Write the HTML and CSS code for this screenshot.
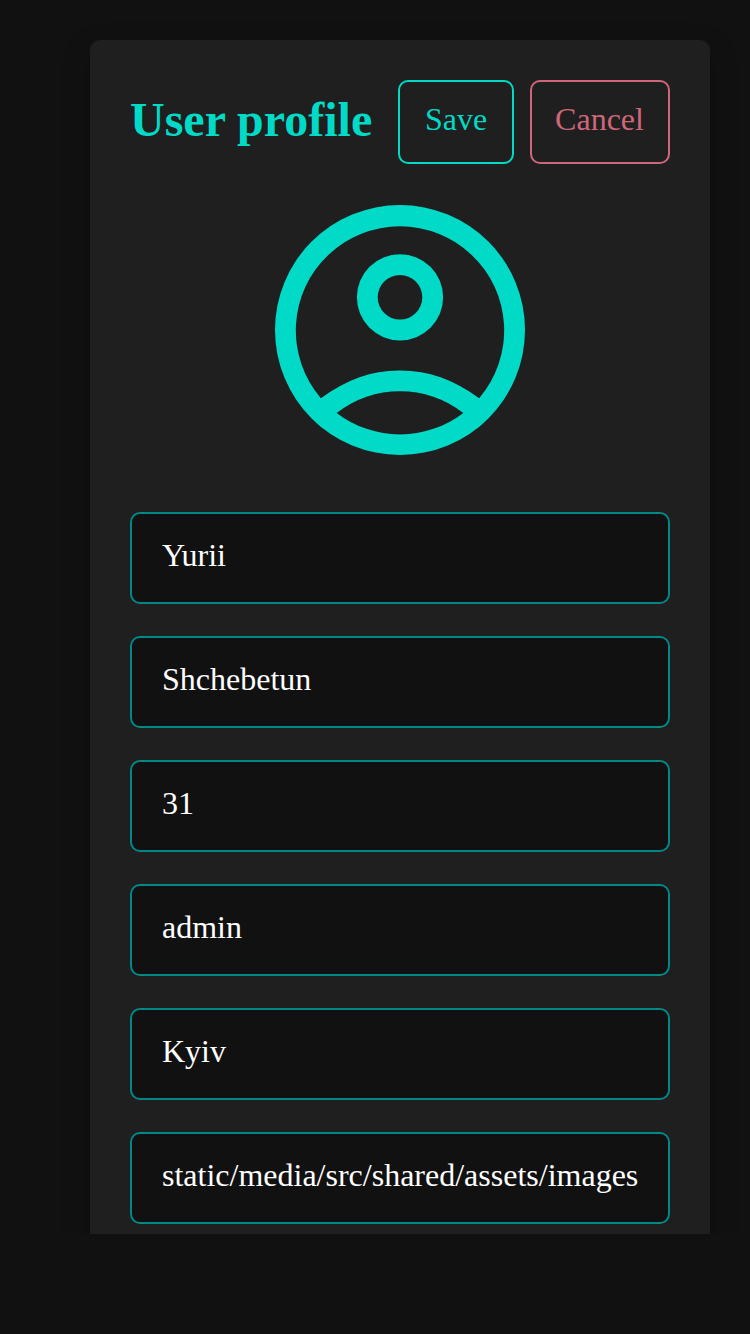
FILE: index.html
```html
<!DOCTYPE html>
<html lang="en">
<head>
<meta charset="utf-8">
<title>User profile</title>
<link rel="stylesheet" href="styles.css">
</head>
<body>
<main class="page">
  <section class="card">
    <header class="card-header">
      <h1 class="title">User profile</h1>
      <div class="actions">
        <button class="btn btn-save" type="button">Save</button>
        <button class="btn btn-cancel" type="button">Cancel</button>
      </div>
    </header>
    <svg class="avatar" viewBox="0 0 24 24" fill="currentColor" fill-rule="evenodd" aria-hidden="true">
      <path d="M12 0A12 12 0 1 1 12 24A12 12 0 1 1 12 0ZM4.4 18.54Q6.3 17.18 8.1 16.53T12 15.89Q14.1 15.89 15.9 16.53T19.6 18.54A10 10 0 1 0 4.4 18.54ZM5.92 19.96A10 10 0 0 0 18.08 19.96C16.3 18.57 14.2 17.87 12 17.87C9.8 17.87 7.7 18.57 5.92 19.96Z"/>
      <path d="M12 4.72A4.14 4.14 0 1 1 12 13A4.14 4.14 0 1 1 12 4.72ZM12 6.72A2.14 2.14 0 1 0 12 11A2.14 2.14 0 1 0 12 6.72Z"/>
    </svg>
    <div class="fields">
      <div class="field">Yurii</div>
      <div class="field">Shchebetun</div>
      <div class="field">31</div>
      <div class="field">admin</div>
      <div class="field">Kyiv</div>
      <div class="field">static/media/src/shared/assets/images</div>
    </div>
  </section>
</main>
</body>
</html>
```
FILE: styles.css
```css
* { box-sizing: border-box; }

body {
  margin: 0;
  height: 1334px;
  overflow: hidden;
  background: #111;
  font-family: "Liberation Serif", "Times New Roman", serif;
}

.page {
  height: 1234px;
  padding: 40px 40px 0 90px;
  overflow: hidden;
}

.card {
  height: 1400px;
  padding: 40px;
  border-radius: 10px;
  background: #1f1f1f;
  box-shadow: 0 10px 30px rgba(0, 0, 0, 0.2);
}

.card-header {
  display: flex;
  justify-content: space-between;
  height: 84px;
}

.title {
  margin: 0;
  padding-top: 12px;
  color: #00dac6;
  font-size: 48px;
  line-height: 55px;
  white-space: nowrap;
}

.actions {
  display: flex;
  gap: 16px;
}

.btn {
  height: 84px;
  padding: 0 0 6px;
  border: 2px solid currentColor;
  border-radius: 10px;
  background: none;
  font: inherit;
  font-size: 32px;
}

.btn-save { width: 116px; color: #00dac6; }

.btn-cancel { width: 140px; padding-right: 1px; color: #cf6679; }

.avatar {
  display: block;
  width: 250px;
  height: 250px;
  margin: 41px auto 57px;
  color: #00dac6;
}

.fields {
  display: flex;
  flex-direction: column;
  gap: 32px;
}

.field {
  height: 92px;
  padding: 23px 30px 0;
  border: 2px solid #018786;
  border-radius: 10px;
  background: #111;
  color: #fff;
  font-size: 32px;
  line-height: 37px;
  white-space: nowrap;
  overflow: hidden;
}
```
